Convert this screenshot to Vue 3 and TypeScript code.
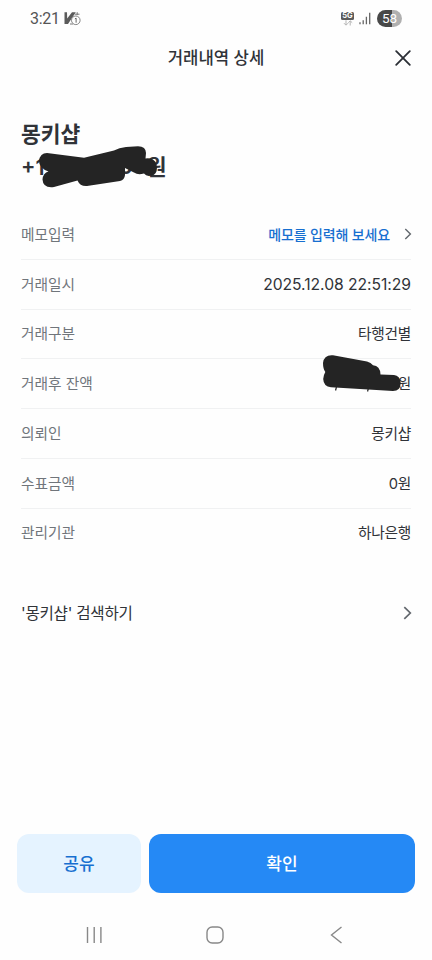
<script setup lang="ts">
interface DetailRow {
  label: string
  value: string
  kind?: 'memo' | 'masked' | 'date'
}

const rows: DetailRow[] = [
  { label: '메모입력', value: '메모를 입력해 보세요', kind: 'memo' },
  { label: '거래일시', value: '2025.12.08 22:51:29', kind: 'date' },
  { label: '거래구분', value: '타행건별' },
  { label: '거래후 잔액', value: '원', kind: 'masked' },
  { label: '의뢰인', value: '몽키샵' },
  { label: '수표금액', value: '0원' },
  { label: '관리기관', value: '하나은행' },
]
</script>

<template>
  <div class="screen">
    <div class="status">
      <div class="status-left">
        <span class="time">3:21</span>
        <svg class="app-icon" width="18" height="15" viewBox="0 0 18 15">
          <path d="M0.5 1.3H3L3.2 7.5L8 1.3H11.8L4 13H0.5Z" fill="#5b5b5b" />
          <path d="M10.800 3.200H15.500M13.200 1.200V4M6 13H9" stroke="#777" stroke-width="1" fill="none" />
          <circle cx="11.800" cy="9.300" r="4.300" fill="#fff" stroke="#777" stroke-width="0.9" />
          <path d="M10.900 7.900L12.100 7.100V11.700" stroke="#666" stroke-width="1" fill="none" />
        </svg>
      </div>
      <div class="status-right">
        <div class="network">
          <span class="network-label">5G</span>
          <svg width="10" height="6" viewBox="0 0 10 6" fill="none" stroke="#b4b4b4" stroke-width="1">
            <path d="M3 0.3V5M1 3.2L3 5.2L5 3.2M7.2 5.5V1M5.3 2.7L7.2 0.8L9.2 2.7" />
          </svg>
        </div>
        <svg class="signal" width="12" height="13" viewBox="0 0 12 13" stroke="#666" stroke-width="1.3">
          <path d="M1 12.3V10.3M4.2 12.3V8.3M7.4 12.3V4.8M10.7 12.3V0.8" />
        </svg>
        <span class="battery">58</span>
      </div>
    </div>

    <header class="header">
      <span class="side"></span>
      <h1>거래내역 상세</h1>
      <button class="side close" aria-label="닫기">
        <svg width="16" height="16" viewBox="0 0 16 16" fill="none" stroke="#2b2f35" stroke-width="1.8" stroke-linecap="round">
          <path d="M1.2 1.2L14.8 14.8M14.8 1.2L1.2 14.8" />
        </svg>
      </button>
    </header>

    <section class="summary">
      <div class="name">몽키샵</div>
      <div class="amount">
        <span class="lead">+1</span><span class="digit">0</span><span>원</span>
        <svg class="amount-mask" width="122" height="44" viewBox="37 145 122 44">
          <path d="M39 161Q40 153 47 153L84 157.700L114 150.500Q119 147.500 126 147L138 146.200Q146 146.500 146 153L145.500 158.500Q154 157.500 156.500 164Q158 172 154 174.700Q147 177.700 144 173.500Q138 175.500 134 172.500L125 168V175Q124.500 180 120 181L87 186Q80 186.500 77.500 180.500L54 187Q43 188.500 42.500 179.500Q43 173 48.500 171.500Q39 168 39 161Z" fill="#242424" />
        </svg>
      </div>
    </section>

    <dl class="details">
      <div v-for="row in rows" :key="row.label" class="row">
        <dt>{{ row.label }}</dt>
        <dd :class="row.kind">
          {{ row.value }}
          <svg v-if="row.kind === 'memo'" class="chev" width="8" height="12" viewBox="0 0 8 12" fill="none" stroke="#62676d" stroke-width="1.4">
            <path d="M1.3 1L6.4 6L1.3 11" />
          </svg>
          <svg v-if="row.kind === 'masked'" class="balance-mask" width="80" height="39" viewBox="322 354 80 39">
            <path d="M336.500 387L335.500 390.500M368.500 388L367.500 391.500" stroke="#333" stroke-width="1.3" />
            <path d="M323 363Q324 354.500 333 355.300L367 361.500Q371 362.500 373 365.300Q380 365.500 380.500 374.500L394 375Q400 375.500 400.700 383Q400.500 391 393 391L331 387.300Q323.500 386.500 323.200 379Q323.500 375 325.300 372Q323 369 323 363Z" fill="#242424" />
          </svg>
        </dd>
      </div>
    </dl>

    <div class="search">
      <span>'몽키샵' 검색하기</span>
      <svg width="9" height="14" viewBox="0 0 9 14" fill="none" stroke="#62676d" stroke-width="1.7">
        <path d="M1.3 1.2L7.3 7L1.3 12.8" />
      </svg>
    </div>

    <footer class="actions">
      <button class="share">공유</button>
      <button class="confirm">확인</button>
    </footer>

    <nav class="system-nav">
      <svg width="18" height="18" viewBox="0 0 18 18" stroke="#888" stroke-width="1.4">
        <path d="M2.500 1V17M9.200 1V17M15.900 1V17" />
      </svg>
      <svg width="18" height="18" viewBox="0 0 18 18" fill="none" stroke="#888" stroke-width="1.4">
        <rect x="1" y="1" width="16" height="16" rx="5.200" />
      </svg>
      <svg width="18" height="18" viewBox="0 0 18 18" fill="none" stroke="#888" stroke-width="1.4">
        <path d="M14.500 1L4.500 9L14.500 17" />
      </svg>
    </nav>
  </div>
</template>

<style>
body {
  margin: 0;
  background: #fefefe;
}
</style>

<style scoped>
.screen {
  box-sizing: border-box;
  width: 432px;
  height: 960px;
  display: flex;
  flex-direction: column;
  overflow: hidden;
  background: #fefefe;
  color: #303338;
  font-family: Inter, 'Noto Sans CJK KR', sans-serif;
}
button {
  border: 0;
  padding: 0;
  background: none;
  font: inherit;
}
.status {
  height: 37px;
  display: flex;
  justify-content: space-between;
  padding: 0 30px;
}
.status-left,
.status-right {
  display: flex;
  align-items: center;
}
.status-left {
  gap: 4px;
}
.time {
  font-family: Roboto, sans-serif;
  font-size: 16px;
  font-weight: 400;
  color: #555;
  letter-spacing: -0.3px;
}
.network {
  display: flex;
  flex-direction: column;
  align-items: center;
  width: 13px;
  margin-right: 5px;
}
.network-label {
  width: 13px;
  height: 8px;
  border-radius: 1.5px;
  background: #5c5c5c;
  color: #fff;
  font-size: 7.5px;
  line-height: 8px;
  font-weight: 700;
  text-align: center;
}
.signal {
  margin-right: 6px;
}
.battery {
  width: 25px;
  height: 17px;
  border-radius: 9px;
  background: linear-gradient(90deg, #484848 58%, #b0b0b0 58%);
  color: #fff;
  font-family: Roboto, sans-serif;
  font-size: 13.5px;
  line-height: 17px;
  font-weight: 400;
  text-align: center;
}
.header {
  height: 41px;
  display: flex;
  align-items: center;
  justify-content: space-between;
  padding: 0 21px;
}
.header h1 {
  margin: 0;
  padding-bottom: 1px;
  font-size: 16.7px;
  font-weight: 500;
}
.side {
  width: 16px;
  height: 16px;
}
.close svg {
  display: block;
}
.summary {
  padding: 40px 21px 0;
  height: 92px;
  font-size: 21.5px;
  line-height: 33px;
  font-weight: 700;
}
.amount {
  position: relative;
  display: flex;
  width: 145.5px;
}
.lead {
  flex: 1;
  font-weight: 600;
}
.digit {
  margin-right: 14px;
  font-size: 20px;
}
.amount-mask {
  position: absolute;
  left: 16px;
  top: -6px;
}
.details {
  margin: 0;
  padding: 0 21px;
}
.row {
  box-sizing: border-box;
  height: 49.75px;
  display: flex;
  align-items: center;
  justify-content: space-between;
  padding-bottom: 2px;
  border-bottom: 1px solid #f0f1f2;
  font-size: 14.7px;
}
.row:last-child {
  border-bottom-color: transparent;
}
dt {
  color: #70757b;
}
dd {
  position: relative;
  margin: 0;
  display: flex;
  align-items: center;
  letter-spacing: -0.25px;
}
.date {
  padding-top: 2px;
  font-size: 15.7px;
  letter-spacing: -0.05px;
}
.memo {
  gap: 14px;
  padding-top: 1px;
  color: #176fd0;
  font-size: 14px;
  font-weight: 500;
  letter-spacing: -0.15px;
}
.chev {
  margin-right: -1px;
}
.balance-mask {
  position: absolute;
  right: 9px;
  top: -18px;
}
.search {
  height: 110px;
  display: flex;
  align-items: center;
  justify-content: space-between;
  padding: 0 20px 0 21px;
  font-size: 15.6px;
  letter-spacing: -0.25px;
}
.search span {
  padding-bottom: 2px;
}
.actions {
  display: flex;
  gap: 8px;
  margin-top: auto;
  padding: 0 17px;
}
.actions button {
  height: 59px;
  padding-bottom: 2px;
  border-radius: 12px;
  font-size: 17px;
  font-weight: 500;
}
.share {
  width: 124px;
  background: #e5f3ff;
  color: #176fd0;
}
.actions .confirm {
  flex: 1;
  background: #2589f5;
  color: #fff;
}
.system-nav {
  height: 67px;
  display: flex;
  align-items: center;
  justify-content: space-between;
  padding: 17px 87px 0 85px;
  box-sizing: border-box;
}
</style>
